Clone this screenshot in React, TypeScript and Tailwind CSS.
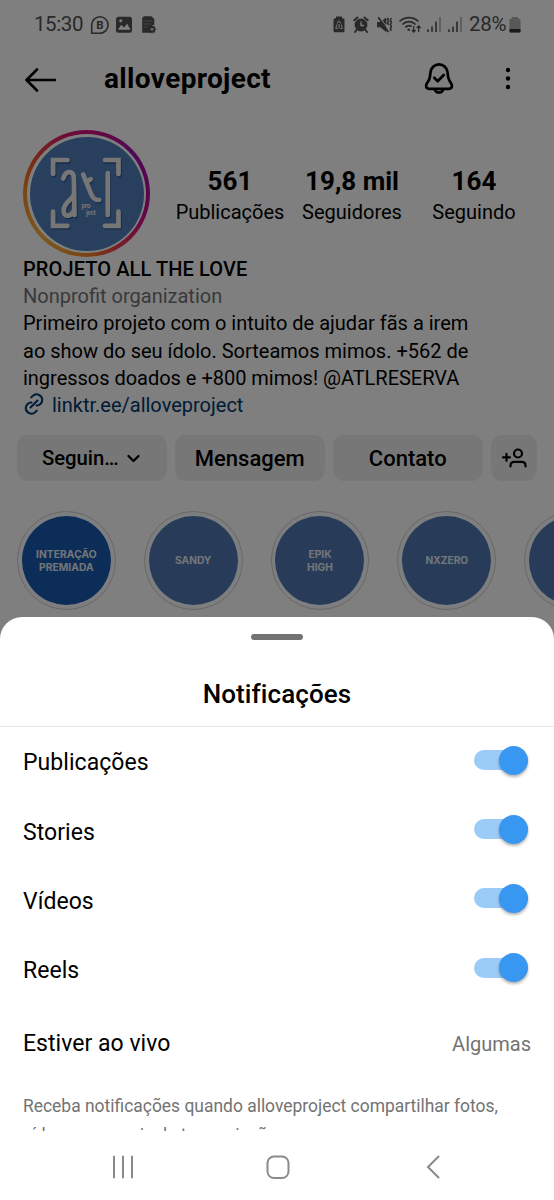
import React from 'react';
import clsx from 'clsx';

const stats = [
  { value: '561', label: 'Publicações' },
  { value: '19,8 mil', label: 'Seguidores' },
  { value: '164', label: 'Seguindo' },
];

const highlights = [
  { lines: ['INTERAÇÃO', 'PREMIADA'], dark: true },
  { lines: ['SANDY'] },
  { lines: ['EPIK', 'HIGH'] },
  { lines: ['NXZERO'] },
  { lines: [] },
];

const toggles = ['Publicações', 'Stories', 'Vídeos', 'Reels'];

function StatusBar() {
  return (
    <div className="flex h-[49px] shrink-0 items-center pl-[34px] pr-[33px] text-[20.5px] text-[#525252]">
      <span className="w-[56px] tracking-[-0.4px]">15:30</span>
      <svg width="68" height="20" viewBox="90 15 68 20" fill="none">
        <path d="M91.7 33.2v-8.4a8.2 8.2 0 1 1 8.2 8.4z" stroke="currentColor" strokeWidth="1.6" strokeLinejoin="round" />
        <text x="99.8" y="29" textAnchor="middle" fontSize="11.5" fontWeight="700" fill="currentColor">B</text>
        <rect x="116" y="16.7" width="16" height="16" rx="2.5" fill="currentColor" />
        <path d="M118 29.8l3.2-5 2.8 2.6 3.2-3.6 3.3 6z" fill="#fff" />
        <circle cx="120.7" cy="20.8" r="1.5" fill="#fff" />
        <path d="M144 16.3h7.5l2.8 3V25h-2v5l-2 2.7h-8.1V18z" fill="currentColor" />
        <path d="M143.5 21h9M143.5 24h7M143.5 27h4" stroke="#999" strokeWidth="0.8" />
        <circle cx="152" cy="29.3" r="2.5" stroke="currentColor" strokeWidth="1.8" />
        <path d="M152 25v8.6M147.7 29.3h8.6M149 26.3l6 6M155 26.3l-6 6" stroke="currentColor" strokeWidth="1.1" />
        <circle cx="152" cy="29.3" r="1.4" fill="#ddd" />
      </svg>
      <svg className="ml-auto" width="132" height="20" viewBox="332 15 132 20" fill="none">
        {/* battery saver */}
        <path d="M336 16.5h6v1.8h1a1.5 1.5 0 0 1 1.5 1.5v11a1.5 1.5 0 0 1-1.5 1.5h-8a1.5 1.5 0 0 1-1.5-1.5v-11a1.5 1.5 0 0 1 1.5-1.5h1z" fill="currentColor" />
        <path d="M338 28.5h-2l.6-4M340 28.5h2l-.6-4M337 23.3l2-2.3 2 2.3" stroke="#ddd" strokeWidth="1.1" />
        <path d="M339 24v4" stroke="#ddd" strokeWidth="1.3" />
        {/* alarm */}
        <circle cx="361" cy="25" r="6.4" fill="currentColor" />
        <path d="M354.3 20.3l3.2-2.8M367.7 20.3l-3.2-2.8M356.5 30l-1.5 2M365.5 30l1.5 2" stroke="currentColor" strokeWidth="2" strokeLinecap="round" />
        <path d="M361 21.5V25.5h3" stroke="#fff" strokeWidth="1.3" />
        {/* vibrate / mute */}
        <path d="M377 22h3.3l5.9-4.5v14.5l-5.9-4.7H377z" fill="currentColor" />
        <path d="M379.8 17l8.7 12.5" stroke="#fff" strokeWidth="1.1" />
        <path d="M378.3 17.2l10 14.8" stroke="currentColor" strokeWidth="1.7" />
        <path d="M388.4 18l-1 1.6 1.2 1.7-1.2 1.7 1.2 1.7M391.3 18l-1 2 1.2 2.2-1.2 2.2 1.2 2.2-1.2 2.2 1 2" stroke="currentColor" strokeWidth="1.5" />
        {/* wifi */}
        <path d="M399.5 21.5c5.5-5.3 13.5-5.3 19 0M402.3 24.5c4-3.7 9.4-3.7 13.4 0M405.2 27.4c2.3-2 5-2 6.5-.7" stroke="currentColor" strokeWidth="1.7" />
        <circle cx="408.7" cy="29.7" r="1.3" fill="currentColor" />
        <path d="M413.7 26v6M411.8 30l1.9 2 1.9-2M418.7 32v-6M416.8 28l1.9-2 1.9 2" stroke="currentColor" strokeWidth="1.3" />
        {/* signal bars */}
        <path d="M428 32v-2.7M432 32v-5.5M436 32v-10.5M449 32v-2.7M453 32v-5.5M457 32v-10.5" stroke="currentColor" strokeWidth="1.6" />
        <path d="M440 32V17M461 32V17" stroke="#b5b5b5" strokeWidth="1.7" />
      </svg>
      <span className="ml-[5px] w-[40px] tracking-[-0.3px]">28%</span>
      <svg width="12" height="18" viewBox="0 0 12 18">
        <path d="M3 1h6v1.5h1a1.5 1.5 0 0 1 1.5 1.5v11.5a1 1 0 0 1-1 1h-9a1 1 0 0 1-1-1V4A1.5 1.5 0 0 1 2 2.5h1z" fill="#b0b0b0" />
        <path d="M.5 13h11v2.5a1 1 0 0 1-1 1h-9a1 1 0 0 1-1-1z" fill="#333" />
      </svg>
    </div>
  );
}

function TopBar() {
  return (
    <div className="flex h-[59px] shrink-0 items-center pl-6">
      <svg width="34" height="26" viewBox="0 0 34 26" fill="none" stroke="#000" strokeWidth="2.6" strokeLinecap="round" strokeLinejoin="round">
        <path d="M31 14H2.5M13 3.500L2.500 14 13 24.500" />
      </svg>
      <h1 className="ml-[46px] text-[28px] font-bold tracking-[0.35px]">alloveproject</h1>
      <svg className="ml-auto" width="30" height="34" viewBox="0 0 30 34" fill="none" stroke="#000" strokeWidth="2.7" strokeLinejoin="round" strokeLinecap="round">
        <path d="M15 2.300c-4.500 0-8.300 3.600-8.600 8.500-.2 4-.7 6.500-2.500 9-1.200 1.700-1.800 2.700-1.800 4 0 1.800 1.200 3 3 3h19.800c1.800 0 3-1.200 3-3 0-1.300-.6-2.300-1.800-4-1.800-2.500-2.300-5-2.500-9-.3-4.900-4.100-8.500-8.600-8.500z" />
        <path d="M11 27.500c.3 2 1.900 3 4 3s3.700-1 4-3" />
        <path d="M10.300 15.700l3.400 3.500 6-6.200" />
      </svg>
      <svg className="ml-[50px] mr-[42px]" width="8" height="26" viewBox="0 0 8 26">
        <circle cx="4" cy="4" r="2.200" />
        <circle cx="4" cy="12.500" r="2.200" />
        <circle cx="4" cy="21" r="2.200" />
      </svg>
    </div>
  );
}

function LogoStrokes() {
  return (
    <g strokeLinecap="round">
      <path d="M52.600 173.500v-14H67M104.500 159.500H118v14M52.600 211v14.300H67M104.500 225.300H118V211" />
      <path d="M62.700 178c1.500-4.500 3.500-6.300 6-6.300 3 0 4.600 2.200 4.700 6.300l.6 36.500M73 194.500c-1 4.500-9.200 7-9.800 15-.2 3.500 1.200 5.700 3.800 5.700 2.700 0 5-2 6.500-5.200" />
      <path d="M82.700 174l7.500 18.500c2 5 4 7.300 8.500 7M86.200 181.300l4-2.500M107.300 172.500v42" />
    </g>
  );
}

function Avatar() {
  return (
    <div className="flex size-[127px] shrink-0 items-center justify-center rounded-full bg-[conic-gradient(#d6107f_0deg,#a010b0_50deg,#b0089f_85deg,#d0108a_115deg,#ee3a4a_150deg,#f58a24_180deg,#fbb040_225deg,#f08a28_275deg,#ef5030_305deg,#dc2068_335deg,#d6107f_360deg)]">
      <div className="flex size-[119px] items-center justify-center rounded-full bg-white">
        <svg className="rounded-full bg-[#527fbc]" width="114" height="114" viewBox="29.500 136.500 114 114" fill="none">
          <g stroke="#1d3f70" strokeOpacity="0.600" strokeWidth="4.700" transform="translate(1 1.300)">
            <LogoStrokes />
          </g>
          <g stroke="#ececec" strokeWidth="4.700">
            <LogoStrokes />
          </g>
          <g fill="#e5e5e5" fontSize="6.500" fontWeight="700" letterSpacing="-0.4">
            <text x="81" y="207">pro</text>
            <text x="85.500" y="214.500">ject</text>
          </g>
        </svg>
      </div>
    </div>
  );
}

function Profile() {
  return (
    <>
      <div className="flex h-[148px] shrink-0 pl-[23px] pt-[22px]">
        <Avatar />
        <div className="ml-[19px] mt-[36px] flex">
          {stats.map((s) => (
            <div key={s.label} className="flex w-[122px] flex-col items-center whitespace-nowrap">
              <span className="text-[26px] font-bold leading-[30px]">{s.value}</span>
              <span className="text-[20px] leading-[33px]">{s.label}</span>
            </div>
          ))}
        </div>
      </div>
      <div className="shrink-0 whitespace-nowrap pl-[23px] text-[20px] leading-[27.2px]">
        <p className="font-medium tracking-[0.1px]">PROJETO ALL THE LOVE</p>
        <p className="text-[#737373]">Nonprofit organization</p>
        <p>Primeiro projeto com o intuito de ajudar fãs a irem</p>
        <p>ao show do seu ídolo. Sorteamos mimos. +562 de</p>
        <p className="tracking-[-0.02px]">ingressos doados e +800 mimos! @ATLRESERVA</p>
        <p className="flex items-center text-[#00376b]">
          <svg className="mb-[3px] mr-[7px]" width="22" height="22" viewBox="0 0 22 22" fill="none" stroke="currentColor" strokeWidth="2" strokeLinecap="round">
            <path d="M7.500 14.500l7-7" />
            <path d="M8.200 4.400l1.300-1.300a5.600 5.600 0 0 1 9.400 5.500c-.3 1-.8 1.700-1.500 2.400-1.100 1.100-2.500 1.600-3.900 1.500" />
            <path d="M13.800 17.600l-1.300 1.300a5.600 5.600 0 0 1-9.400-5.500c.3-1 .8-1.700 1.500-2.400 1.100-1.100 2.500-1.600 3.900-1.500" />
          </svg>
          linktr.ee/alloveproject
        </p>
      </div>
      <div className="mt-4 flex h-[46px] shrink-0 gap-[8.5px] pl-[17px] text-[22px] font-medium">
        <div className="flex w-[149.5px] items-center justify-center rounded-[11px] bg-[#efefef] pr-[2px] text-[20.3px]">
          Seguin…
          <svg className="ml-2" width="13" height="9" viewBox="0 0 13 9" fill="none" stroke="#000" strokeWidth="2.300" strokeLinecap="round" strokeLinejoin="round">
            <path d="M1.500 2l5 5 5-5" />
          </svg>
        </div>
        <div className="flex w-[149.5px] items-center justify-center rounded-[11px] bg-[#efefef] pt-px">Mensagem</div>
        <div className="flex w-[149.5px] items-center justify-center rounded-[11px] bg-[#efefef] pt-px">Contato</div>
        <div className="flex w-[46px] items-center justify-center rounded-[11px] bg-[#efefef]">
          <svg width="26" height="20" viewBox="0 0 26 20" fill="none" stroke="#000" strokeWidth="2.200" strokeLinecap="round">
            <path d="M2 9.300h7M5.500 5.800v7" />
            <circle cx="17" cy="5.500" r="4" />
            <path d="M9.500 18.500v-1c0-2.300 1.600-3.700 3.800-3.700h7.400c2.200 0 3.800 1.400 3.800 3.700v1" />
          </svg>
        </div>
      </div>
    </>
  );
}

function Highlights() {
  return (
    <div className="mt-[30px] flex shrink-0 gap-7 overflow-hidden pl-[17px]">
      {highlights.map((h, i) => (
        <div key={i} className="flex size-[98.8px] shrink-0 items-center justify-center rounded-full border border-[#d5cdc8] bg-[#fbfcff]">
          <div
            className={clsx(
              'flex size-[89px] flex-col items-center justify-center rounded-full font-[Inter] text-[10.2px] font-bold leading-[12.5px] text-[#e6ebf2]',
              h.dark ? 'bg-[#185ab0] tracking-[0.1px]' : 'bg-[#5079b4]'
            )}
          >
            {h.lines.map((line) => (
              <span key={line}>{line}</span>
            ))}
          </div>
        </div>
      ))}
    </div>
  );
}

function Toggle() {
  return (
    <div className="mb-[3px] flex h-5 w-[54px] items-center justify-end rounded-full bg-[#9bcbf7]">
      <div className="size-[29px] shrink-0 rounded-full bg-[#3897f0] shadow-[0_2px_3px_rgba(0,0,0,0.3)]" />
    </div>
  );
}

function NotificationSheet() {
  return (
    <div className="absolute inset-x-0 bottom-0 flex h-[583px] flex-col rounded-t-[22px] bg-white">
      <div className="mx-auto mt-[17px] h-[6px] w-[52px] shrink-0 rounded-full bg-[#737373]" />
      <h2 className="flex h-[87px] shrink-0 items-center justify-center border-b border-[#e6e6e6] pt-[23px] text-[26px] font-medium tracking-[0.1px]">Notificações</h2>
      <div className="flex flex-col pl-[23px] pr-[26px] text-[23px]">
        {toggles.map((label) => (
          <div key={label} className="flex h-[69.2px] items-center justify-between">
            <span className="pt-[4px] tracking-[0.05px]">{label}</span>
            <Toggle />
          </div>
        ))}
      </div>
      <div className="flex h-[78px] shrink-0 items-center justify-between pl-[23px] pr-[23px] pt-[3px] text-[23px]">
        <span className="tracking-[0.03px]">Estiver ao vivo</span>
        <span className="pb-px text-[20px] text-[#737373]">Algumas</span>
      </div>
      <p className="mt-[11px] h-[38px] shrink-0 overflow-hidden whitespace-nowrap pl-[23px] text-[17.45px] leading-[27px] text-[#737373]">
        Receba notificações quando alloveproject compartilhar fotos,
        <span className="block pt-[2px]">vídeos ou canais de transmissão.</span>
      </p>
      <div className="mt-auto flex h-[67px] shrink-0 items-center pl-[112px]">
        <svg width="22" height="24" viewBox="0 0 22 24" stroke="#8a8a8a" strokeWidth="2" strokeLinecap="round">
          <path d="M2 1.500v21M11 1.500v21M20 1.500v21" />
        </svg>
        <svg className="ml-[132px]" width="24" height="24" viewBox="0 0 24 24" fill="none" stroke="#8a8a8a" strokeWidth="2">
          <rect x="1.500" y="1.500" width="21" height="21.500" rx="6.500" />
        </svg>
        <svg className="ml-[135px]" width="16" height="24" viewBox="0 0 16 24" fill="none" stroke="#8a8a8a" strokeWidth="2" strokeLinecap="round">
          <path d="M13.500 1.500L3 12l10.500 10.500" />
        </svg>
      </div>
    </div>
  );
}

export default function App() {
  return (
    <div className="relative flex h-[1200px] w-[554px] flex-col overflow-hidden bg-white font-[Roboto,sans-serif] text-black">
      <StatusBar />
      <TopBar />
      <Profile />
      <Highlights />
      <div className="absolute inset-0 bg-black/50" />
      <NotificationSheet />
    </div>
  );
}
